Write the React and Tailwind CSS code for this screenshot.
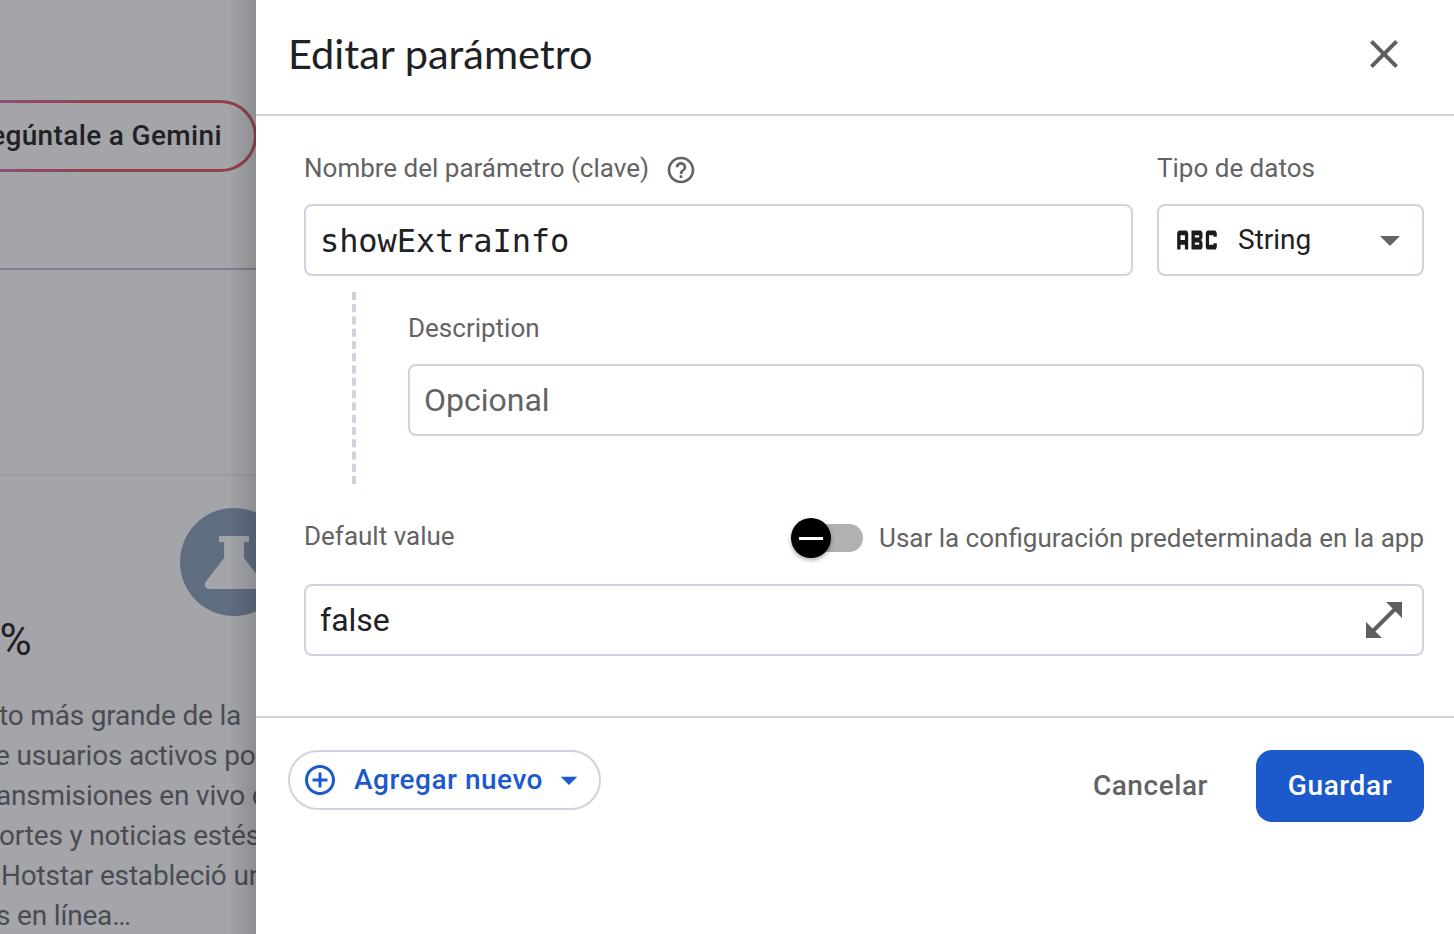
import React from "react";
import { MdAbc, MdOpenInFull, MdHelpOutline, MdClose, MdAddCircleOutline, MdArrowDropDown } from "react-icons/md";

const roboto = "font-['Roboto',sans-serif]";

function Backdrop() {
  return (
    <div className={`relative w-[256px] shrink-0 h-full overflow-hidden bg-[#a3a5a9] ${roboto}`}>
      <div className="flex flex-col h-full">
        <div className="h-[270px] shrink-0 border-b-2 border-[#7f838e] pt-[100px]">
          <div className="ml-[-60px] w-[317px] h-[72px] rounded-r-[36px] bg-gradient-to-r from-[#8a5290] via-[#94404c] to-[#94404c] p-[3px] pl-0">
            <div className="h-full rounded-r-[33px] bg-[#a3a5a9] flex items-center justify-end pr-[32px] whitespace-nowrap text-[28px] font-medium tracking-[0.35px] text-[#1f2126]">
              Pregúntale a Gemini
            </div>
          </div>
        </div>
        <div className="h-[206px] shrink-0 border-b-2 border-[#9a9ca1]" />
        <div className="relative flex-1 pt-[32px]">
          <div className="ml-[180px] w-[108px] h-[108px] rounded-full bg-[#5f6d80] flex items-center justify-center">
            <svg width="60" height="53" viewBox="0 0 60 53" className="block" fill="#a3a5a9">
              <path d="M15 0h30v6h-5v16l18.5 24c1.8 2.6.4 7-3.5 7H5c-3.900 0-5.300-4.400-3.500-7L20 22V6h-5z" />
            </svg>
          </div>
          <div className="ml-[-50px] mt-[4px] text-[44px] leading-[40px] text-[#1f2126] whitespace-nowrap">75%</div>
          <div className="mt-[36px] text-[28px] tracking-[-0.18px] leading-[40px] text-[#4a4c53] whitespace-nowrap">
            <div className="ml-[-1px]">to más grande de la</div>
            <div className="ml-[-5px]">e usuarios activos por</div>
            <div className="ml-[-4px]">ansmisiones en vivo de</div>
            <div className="ml-[-1px]">ortes y noticias estés</div>
            <div className="ml-[1px]">Hotstar estableció un</div>
            <div className="ml-[-4px]">s en línea…</div>
          </div>
        </div>
      </div>
      <div className="absolute inset-y-0 right-0 w-[28px] bg-gradient-to-r from-transparent to-[#00000024]" />
    </div>
  );
}

function Field({ className = "", children }) {
  return (
    <div className={`h-[72px] rounded-[8px] border-2 border-[#ced3de] bg-white flex items-center ${className}`}>
      {children}
    </div>
  );
}

export default function App() {
  return (
    <div className={`flex w-[1454px] h-[934px] overflow-hidden bg-white ${roboto}`}>
      <Backdrop />
      <div className="flex-1 flex flex-col min-w-0">
        <div className="h-[116px] shrink-0 border-b-2 border-[#ced3de] flex items-center justify-between pl-[32px] pr-[46px] pb-[6px]">
          <span className="font-['Lato',sans-serif] text-[41.5px] leading-[48px] mt-[-2px] text-[#202124]">Editar parámetro</span>
          <MdClose size={48} className="text-[#5f5f5f]" />
        </div>
        <div className="h-[602px] shrink-0 border-b-2 border-[#ced3de] pl-[48px] pr-[30px] pt-[36px] text-[#636363]">
          <div className="flex gap-[24px]">
            <div className="w-[829px]">
              <div className="h-[36px] flex items-center text-[26px] pb-[4px]">
                <span>Nombre del parámetro (clave)</span>
                <MdHelpOutline size={32} className="ml-[16px] mt-[4px]" />
              </div>
              <Field className="mt-[16px] pl-[14px] pt-[1px] font-['DejaVu_Sans_Mono',monospace] text-[32px] tracking-[-0.1px] text-[#202124]">
                showExtraInfo
              </Field>
            </div>
            <div className="flex-1">
              <div className="h-[36px] flex items-center text-[26px] pb-[4px]">Tipo de datos</div>
              <Field className="mt-[16px] pl-[14px] pr-[8px] text-[#202124] text-[28px]">
                <MdAbc size={48} className="text-[#1c1c1c] scale-x-[1.1] scale-y-[1.6]" />
                <span className="ml-[17px] flex-1 mt-[-1px]">String</span>
                <MdArrowDropDown size={48} className="text-[#636363]" />
              </Field>
            </div>
          </div>
          <div className="mt-[16px] ml-[48px] h-[192px] border-l-4 border-dashed border-[#ced3de] pl-[52px] pt-[18px]">
            <div className="h-[36px] flex items-center text-[26px]">Description</div>
            <Field className="mt-[18px] pl-[14px] text-[32px] text-[#636363]">Opcional</Field>
          </div>
          <div className="mt-[34px] h-[36px] flex items-center justify-between text-[26px]">
            <span>Default value</span>
            <div className="flex items-center mt-[4px]">
              <div className="relative w-[64px] h-[28px] ml-[8px] rounded-full bg-[#b1b1b1]">
                <div className="absolute left-[-8px] top-[-6px] w-[40px] h-[40px] rounded-full bg-black shadow-[0_2px_4px_rgba(0,0,0,0.35)] flex items-center justify-center">
                  <div className="w-[24px] h-[3px] bg-white" />
                </div>
              </div>
              <span className="ml-[16px]">Usar la configuración predeterminada en la app</span>
            </div>
          </div>
          <Field className="mt-[30px] pl-[14px] pr-[14px] text-[32px] text-[#202124] justify-between">
            <span>false</span>
            <MdOpenInFull size={48} className="text-[#5f5f5f]" />
          </Field>
        </div>
        <div className="flex-1 flex items-start justify-between pl-[32px] pr-[30px] pt-[32px]">
          <button className="w-[313px] h-[60px] rounded-full border-2 border-[#ced3de] flex items-center pl-[12px] text-[#1c5acb] text-[28px] font-medium tracking-[0.5px]">
            <MdAddCircleOutline size={36} />
            <span className="ml-[16px]">Agregar nuevo</span>
            <MdArrowDropDown size={40} className="ml-[6px]" />
          </button>
          <div className="flex items-center gap-[48px]">
            <span className="text-[28px] font-medium tracking-[0.55px] text-[#636363]">Cancelar</span>
            <button className="w-[168px] h-[72px] rounded-[16px] bg-[#1c5acb] text-white text-[28px] font-medium tracking-[0.6px]">Guardar</button>
          </div>
        </div>
      </div>
    </div>
  );
}
